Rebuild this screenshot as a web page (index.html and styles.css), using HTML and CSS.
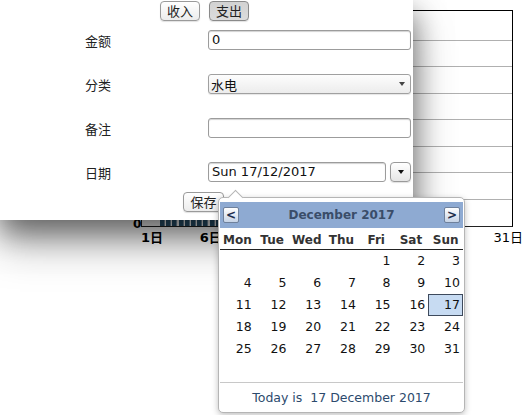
FILE: index.html
```html
<!DOCTYPE html>
<html>
<head>
<meta charset="utf-8">
<link rel="stylesheet" href="styles.css">
</head>
<body>
<div class="chart">
  <div class="ylab">0</div>
  <div class="plot">
    <div class="gl"></div><div class="gl"></div><div class="gl"></div><div class="gl"></div>
    <div class="gl"></div><div class="gl"></div><div class="gl"></div>
    <div class="gl last"><div class="bars"></div></div>
  </div>
  <div class="xlabels">
    <span class="xl d1 bold">1日</span>
    <span class="xl d6 bold">6日</span>
    <span class="xl d31">31日</span>
  </div>
</div>

<div class="dialog">
  <div class="toggles">
    <button class="btn">收入</button>
    <button class="btn on">支出</button>
  </div>
  <div class="form">
    <label class="lbl">金额</label>
    <div class="field">0</div>
    <label class="lbl">分类</label>
    <div class="combo"><span>水电</span><span class="tri"></span></div>
    <label class="lbl">备注</label>
    <div class="field"></div>
    <label class="lbl">日期</label>
    <div class="daterow">
      <div class="field datef">Sun 17/12/2017</div>
      <div class="dbtn"><span class="tri dark"></span></div>
    </div>
  </div>
  <div class="saverow"><button class="btn">保存</button></div>
</div>

<div class="popup">
  <div class="cal-head">
    <span class="nav">&lt;</span>
    <span class="month">December 2017</span>
    <span class="nav">&gt;</span>
  </div>
  <div class="dow">
    <span>Mon</span><span>Tue</span><span>Wed</span><span>Thu</span><span>Fri</span><span>Sat</span><span>Sun</span>
  </div>
  <div class="days">
    <span></span><span></span><span></span><span></span><span>1</span><span>2</span><span>3</span>
    <span>4</span><span>5</span><span>6</span><span>7</span><span>8</span><span>9</span><span>10</span>
    <span>11</span><span>12</span><span>13</span><span>14</span><span>15</span><span>16</span><span class="sel">17</span>
    <span>18</span><span>19</span><span>20</span><span>21</span><span>22</span><span>23</span><span>24</span>
    <span>25</span><span>26</span><span>27</span><span>28</span><span>29</span><span>30</span><span>31</span>
    <span></span><span></span><span></span><span></span><span></span><span></span><span></span>
  </div>
  <div class="today">Today is&nbsp; 17 December 2017</div>
</div>
</body>
</html>
```
FILE: styles.css
```css
html, body {
  margin: 0;
  padding: 0;
  background: #fff;
}
body {
  width: 530px;
  height: 415px;
  overflow: hidden;
  position: relative;
  font-family: "DejaVu Sans", "Noto Sans CJK SC", sans-serif;
  font-size: 13px;
  color: #111;
}

/* background chart */
.chart {
  margin: 10px 0 0 133px;
  display: grid;
  grid-template-columns: 8px 372px;
}
.ylab {
  align-self: end;
  font-weight: bold;
  font-size: 12px;
  line-height: 12px;
  margin-bottom: -3px;
  color: #000;
}
.plot {
  height: 217px;
  box-sizing: border-box;
  border-top: 1px solid #000;
  border-right: 1px solid #000;
  border-left: 1px solid #222;
  border-bottom: 1px solid #222;
  display: grid;
  grid-template-rows: 30px repeat(7, 1fr);
}
.gl {
  border-bottom: 1px solid #b0b0b0;
  display: flex;
  align-items: flex-end;
}
.gl.last { border-bottom: none; }
.bars {
  margin-left: 18px;
  width: 192px;
  height: 7px;
  background: repeating-linear-gradient(90deg, #2b5673 0 4px, #7c97aa 4px 5px, transparent 5px 6.2px);
}
.xlabels {
  grid-column: 2;
  display: grid;
  grid-template-columns: repeat(31, 11.75px);
  font-family: "DejaVu Sans", "Noto Sans CJK SC", sans-serif;
  font-size: 13px;
  line-height: 15px;
  margin-top: 3px;
  color: #000;
}
.xl { white-space: nowrap; }
.xl.bold { font-weight: bold; }
.d1 { grid-column: 1; }
.d6 { grid-column: 6; }
.d31 { grid-column: 31; }

/* dialog window */
.dialog {
  position: absolute;
  left: 0;
  top: 0;
  width: 413px;
  height: 220px;
  background: #fff;
  box-shadow: 0 12px 28px rgba(0,0,0,0.5), 0 26px 40px rgba(0,0,0,0.25);
}
.toggles, .saverow {
  display: flex;
  justify-content: center;
  gap: 9px;
  padding-right: 6px;
}
.toggles { padding-top: 1px; padding-left: 2px; }
.btn {
  box-sizing: border-box;
  height: 20px;
  padding: 0 6px;
  margin: 0;
  border: 1px solid #9a9a9a;
  border-radius: 4px;
  background: linear-gradient(#ffffff, #ececec);
  font-family: "Noto Sans CJK SC", sans-serif;
  font-size: 13px;
  line-height: 18px;
  color: #222;
  box-shadow: 0 1px 1px rgba(0,0,0,0.12);
}
.btn.on {
  background: linear-gradient(#d2d2d2, #dcdcdc);
  border-color: #8a8a8a;
}
.form {
  display: grid;
  grid-template-columns: 123px 203px;
  row-gap: 24px;
  align-items: center;
  padding-left: 85px;
  margin-top: 9px;
}
.lbl {
  font-family: "Noto Sans CJK SC", sans-serif;
  font-size: 13px;
  color: #222;
}
.field {
  box-sizing: border-box;
  height: 20px;
  border: 1px solid #9c9c9c;
  border-radius: 3px;
  box-shadow: inset 0 1px 1px rgba(0,0,0,0.18);
  padding-left: 3px;
  line-height: 18px;
  font-size: 13px;
  color: #111;
  background: #fff;
}
.combo {
  box-sizing: border-box;
  height: 20px;
  border: 1px solid #a0a0a0;
  border-radius: 3px;
  background: linear-gradient(#fdfdfd, #ececec);
  padding: 0 5px 0 2px;
  display: flex;
  align-items: center;
  justify-content: space-between;
  font-family: "Noto Sans CJK SC", sans-serif;
  font-size: 13px;
  color: #111;
  box-shadow: 0 1px 1px rgba(0,0,0,0.1);
}
.tri {
  width: 0;
  height: 0;
  border-left: 3.5px solid transparent;
  border-right: 3.5px solid transparent;
  border-top: 4px solid #444;
}
.tri.dark { border-top-color: #111; }
.daterow {
  display: flex;
  gap: 4px;
}
.datef { width: 178px; }
.dbtn {
  box-sizing: border-box;
  width: 21px;
  height: 20px;
  border: 1px solid #9a9a9a;
  border-radius: 4px;
  background: linear-gradient(#ffffff, #e6e6e6);
  display: flex;
  align-items: center;
  justify-content: center;
  box-shadow: 0 1px 1px rgba(0,0,0,0.12);
}
.saverow { margin-top: 10px; }

/* calendar popup */
.popup {
  position: absolute;
  left: 218px;
  top: 197px;
  width: 247px;
  height: 216px;
  box-sizing: border-box;
  padding: 4px 1px 0 1px;
  border: 1px solid #b5b5b5;
  border-radius: 5px;
  background: #fff;
  box-shadow: 0 2px 6px rgba(0,0,0,0.25);
  font-family: "DejaVu Sans", sans-serif;
}
.popup::before {
  content: "";
  position: absolute;
  left: 11px;
  top: -6px;
  width: 10px;
  height: 10px;
  background: #fff;
  border-left: 1px solid #b5b5b5;
  border-top: 1px solid #b5b5b5;
  transform: rotate(45deg);
}
.cal-head {
  position: relative;
  height: 26px;
  background: #8eaad2;
  display: flex;
  align-items: center;
  justify-content: space-between;
  padding: 0 3px;
}
.nav {
  box-sizing: border-box;
  width: 16px;
  height: 16px;
  border: 1px solid #6f819c;
  border-radius: 2px;
  background: linear-gradient(#ffffff, #c6d3e6);
  font-weight: bold;
  font-size: 12px;
  line-height: 14px;
  text-align: center;
  color: #1d2d4c;
}
.month {
  font-weight: bold;
  font-size: 12px;
  color: #3a4d69;
}
.dow {
  display: grid;
  grid-template-columns: repeat(7, 1fr);
  height: 21px;
  border-bottom: 1px solid #222;
  font-size: 12px;
  font-weight: bold;
  line-height: 24px;
  color: #333;
  text-align: center;
}
.days {
  display: grid;
  grid-template-columns: repeat(7, 1fr);
  grid-auto-rows: 22px;
  font-size: 12.5px;
  line-height: 22px;
  color: #111;
}
.days span {
  text-align: right;
  padding-right: 3px;
  box-sizing: border-box;
}
.days .sel {
  background: #c7dbf2;
  border: 1px solid #3e4a5c;
  line-height: 20px;
  padding-right: 2px;
}
.today {
  border-top: 1px solid #c8c8c8;
  height: 29px;
  line-height: 29px;
  text-align: center;
  font-size: 12.5px;
  color: #2c4a6d;
}
```
